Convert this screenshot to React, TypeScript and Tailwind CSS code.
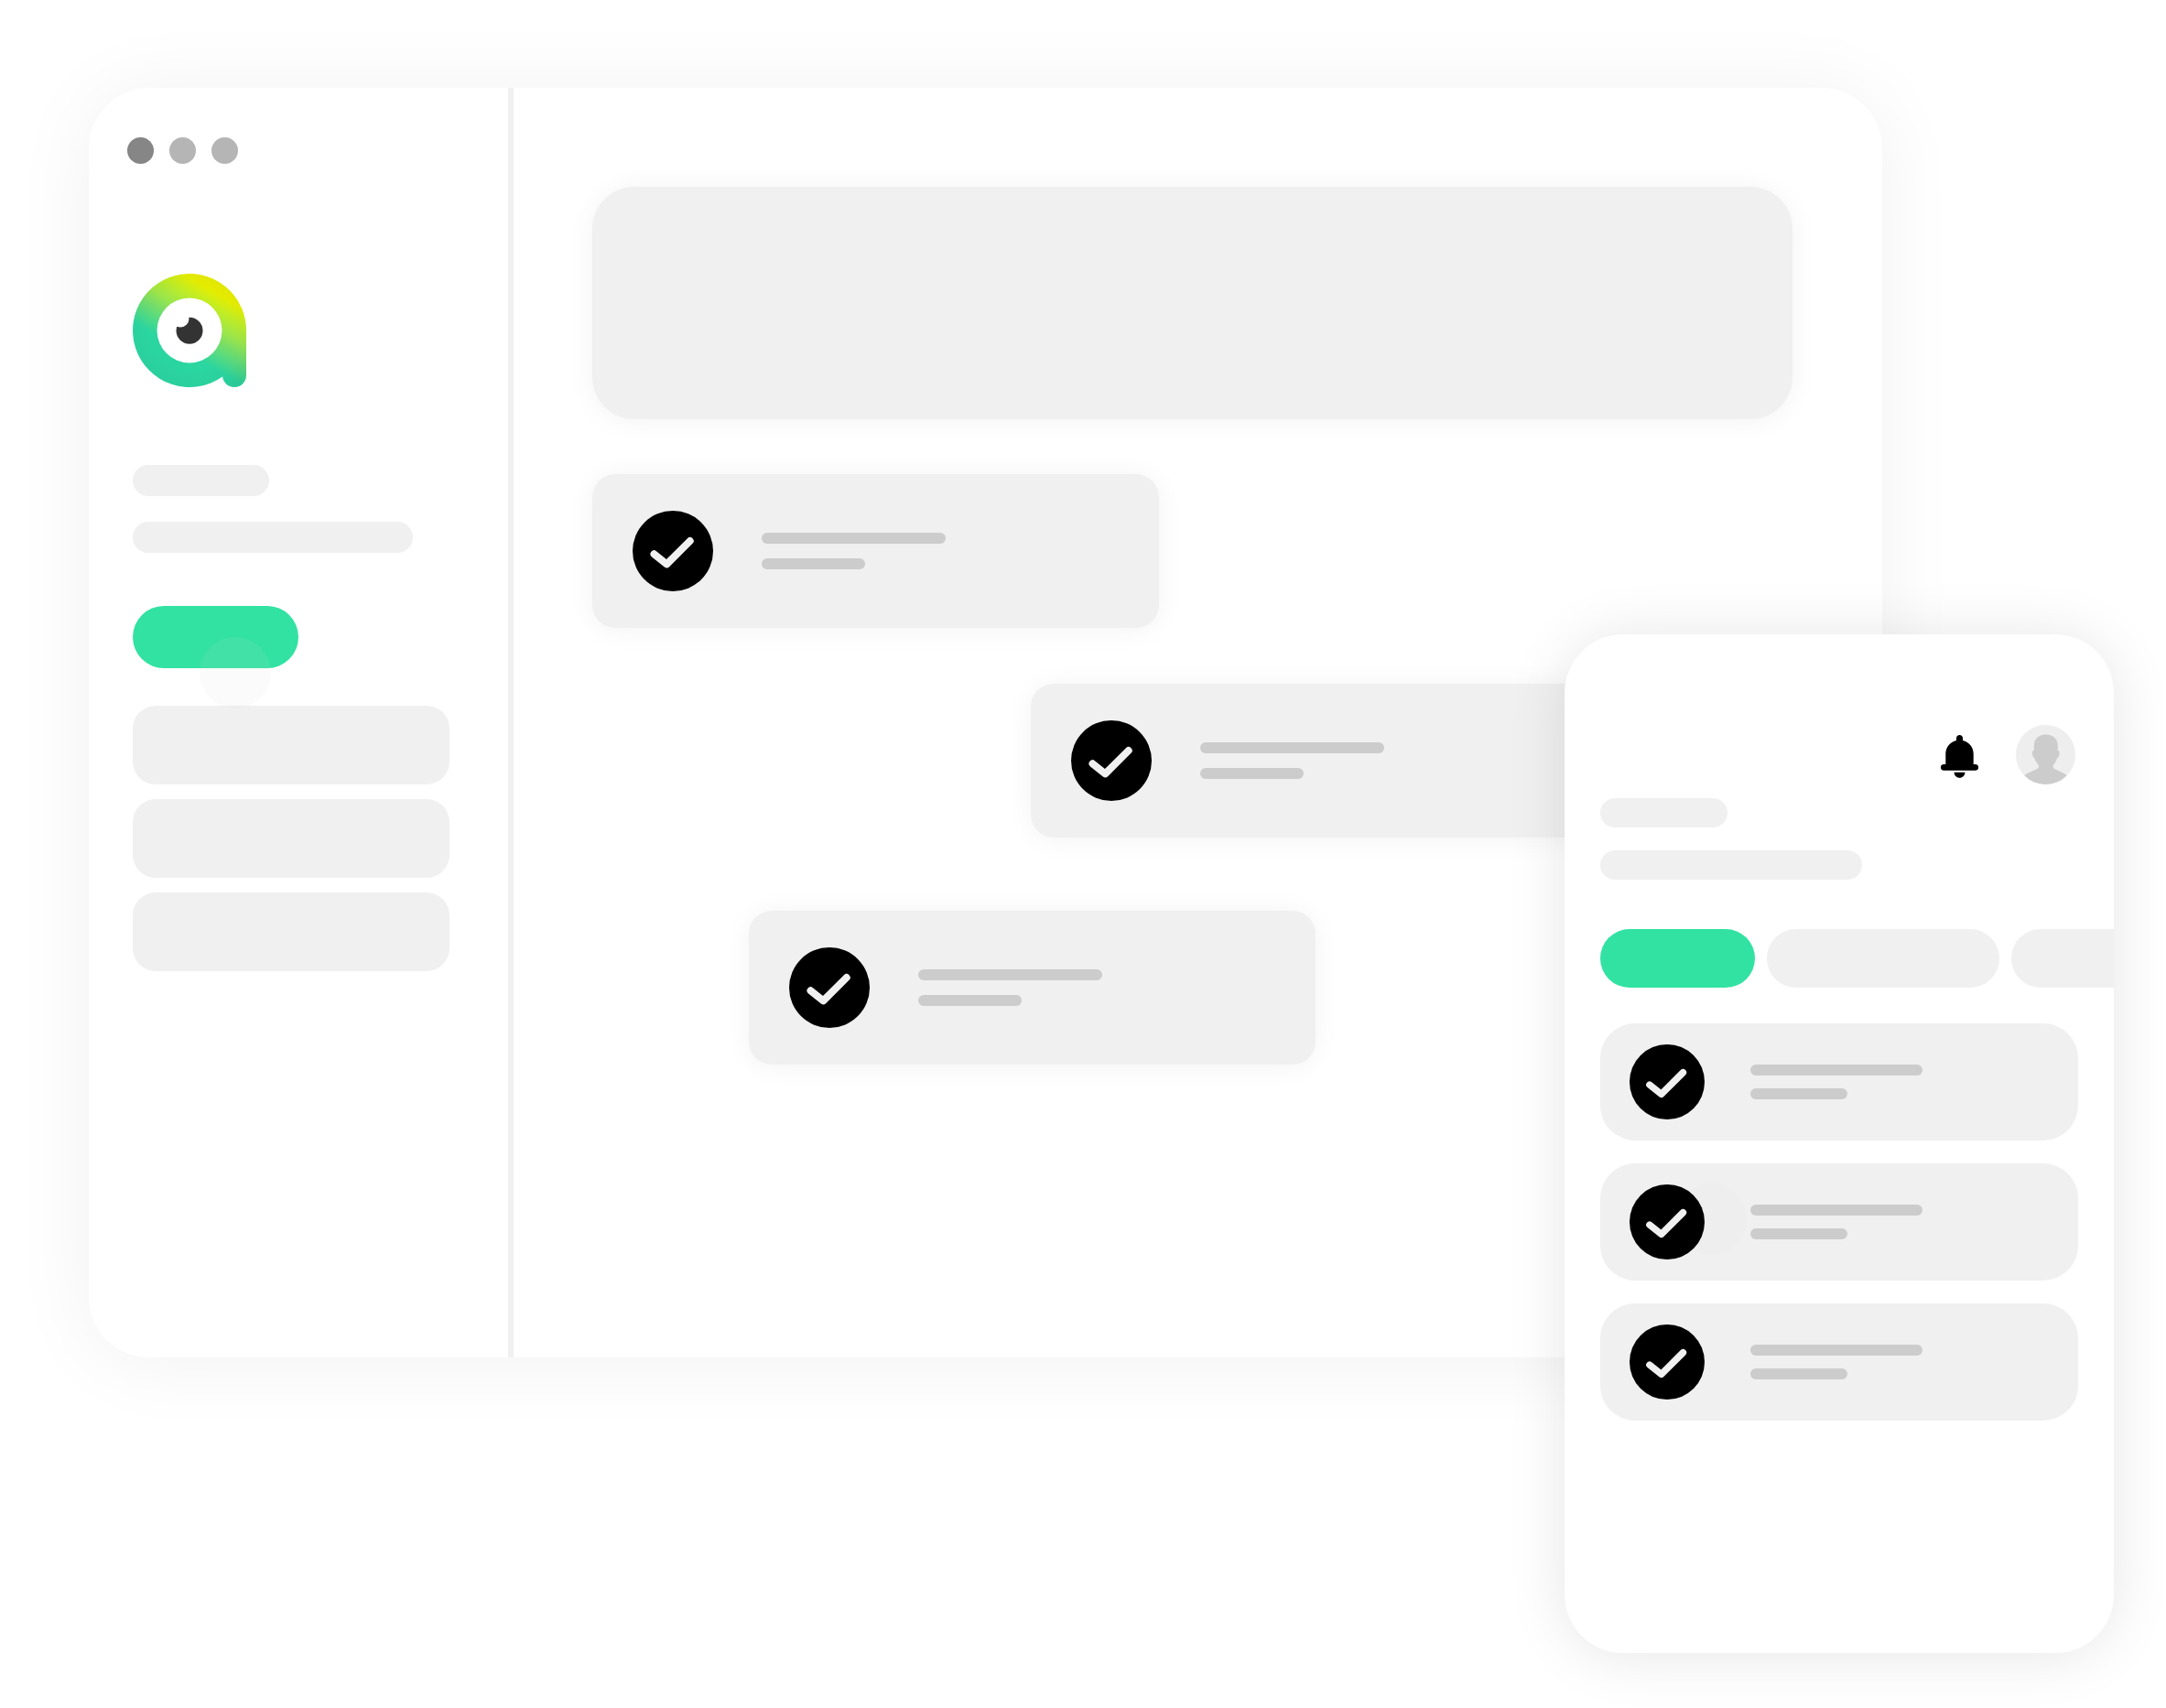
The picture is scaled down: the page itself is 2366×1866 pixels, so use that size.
type CardProps = { size: "lg" | "sm"; className?: string };

function CheckCircle({ className }: { className: string }) {
  return (
    <svg viewBox="0 0 88 88" className={className} role="img" aria-label="Done">
      <circle cx="44" cy="44" r="44" fill="#000" />
      <path
        d="M23.5 47.3 37.3 58.3 62.7 33"
        fill="none"
        stroke="#f0f0f0"
        strokeWidth="8"
        strokeLinecap="round"
        strokeLinejoin="round"
      />
    </svg>
  );
}

function TaskCard({ size, className = "" }: CardProps) {
  if (size === "lg") {
    return (
      <article
        className={`flex h-[168px] w-[619px] items-center rounded-[25px] bg-[#f0f0f0] pl-11 shadow-[0_2px_30px_rgba(0,0,0,0.05)] ${className}`}
      >
        <CheckCircle className="size-[88px] shrink-0" />
        <div className="ml-[53px] flex flex-col gap-4">
          <div className="h-[12px] w-[201px] rounded-full bg-[#cccccc]" />
          <div className="h-[12px] w-[113px] rounded-full bg-[#cccccc]" />
        </div>
      </article>
    );
  }
  return (
    <article className={`flex h-32 items-center rounded-[38px] bg-[#f0f0f0] pl-8 ${className}`}>
      <CheckCircle className="relative size-[82px] shrink-0" />
      <div className="ml-[50px] flex flex-col gap-[14px]">
        <div className="h-[12px] w-[188px] rounded-full bg-[#cccccc]" />
        <div className="h-[12px] w-[106px] rounded-full bg-[#cccccc]" />
      </div>
    </article>
  );
}

function Logo() {
  return (
    <svg viewBox="0 0 124 124" className="size-[124px]" role="img" aria-label="Logo">
      <defs>
        <linearGradient id="logo-hue" gradientUnits="userSpaceOnUse" x1="20" y1="-34.6" x2="-42.5" y2="73.6">
          <stop offset="0" stopColor="#e6ea00" />
          <stop offset="0.1" stopColor="#e6ee00" />
          <stop offset="0.21" stopColor="#c3ed22" />
          <stop offset="0.36" stopColor="#9ce64a" />
          <stop offset="0.46" stopColor="#78de68" />
          <stop offset="0.68" stopColor="#2bd6a0" />
          <stop offset="1" stopColor="#2ad3a0" />
        </linearGradient>
        <radialGradient id="logo-shade" gradientUnits="userSpaceOnUse" cx="62" cy="62" r="78">
          <stop offset="0.55" stopColor="#000" stopOpacity="0" />
          <stop offset="0.8" stopColor="#000" stopOpacity="0.02" />
          <stop offset="1" stopColor="#000" stopOpacity="0.06" />
        </radialGradient>
      </defs>
      {["url(#logo-hue)", "url(#logo-shade)"].map((fill) => (
        <path
          key={fill}
          fill={fill}
          d="M62 0A62 62 0 0 1 124 62V111A13 13 0 0 1 98 111V112.5A62 62 0 1 1 62 0Z"
        />
      ))}
      <circle cx="62" cy="62" r="35.5" fill="#fff" />
      <circle cx="62" cy="62.3" r="14.5" fill="#333" />
      <circle cx="52" cy="49" r="9.5" fill="#fff" />
    </svg>
  );
}

function BellIcon() {
  return (
    <svg viewBox="0 0 41 47" className="h-[47px] w-[41px]" aria-hidden="true">
      <path d="M20.5 0C18.5 0 17 1.5 17 3.5V6C10 7.5 5.3 13.5 5.3 20.5V32H3.3A3.3 3.3 0 0 0 3.3 38.7H37.7A3.3 3.3 0 0 0 37.7 32H35.7V20.5C35.7 13.5 31 7.5 24 6V3.5C24 1.5 22.5 0 20.5 0Z" />
      <path d="M14.5 40.7H26.5C26.3 44.2 23.8 46.7 20.5 46.7S14.7 44.2 14.5 40.7Z" />
    </svg>
  );
}

function Avatar() {
  return (
    <svg viewBox="0 0 65 65" className="size-[65px]" role="img" aria-label="Profile">
      <defs>
        <clipPath id="avatar-clip">
          <circle cx="32.5" cy="32.5" r="32.5" />
        </clipPath>
      </defs>
      <circle cx="32.5" cy="32.5" r="32.5" fill="#eee" />
      <path
        clipPath="url(#avatar-clip)"
        fill="#ccc"
        d="M32.7 10.4C40 10.4 45.5 14.5 45.7 22V28C47.4 28 48 30 47.5 32C47 34.5 46 36 45 36.5C44 40 42.5 42 41 43.5C40 46 40.5 47 43 48.5C47 50.5 51 51.5 55.5 55L56 65H9.5V55C14 51.5 18.5 50.5 22.5 48.5C25 47 25.5 46 24.5 43.5C23 42 21.5 40 20.5 36.5C19.3 36 18.5 34.5 18 32C17.5 30 18 28 19.8 28V22C20 14.5 25.5 10.4 32.7 10.4Z"
      />
    </svg>
  );
}

export default function App() {
  return (
    <main className="relative min-h-screen overflow-hidden bg-white pt-24 pr-[310px] pb-[383px] pl-[97px]">
      <section
        aria-label="Desktop workspace"
        className="flex min-h-[1387px] rounded-[66px] bg-white shadow-[0_4px_90px_rgba(0,0,0,0.06)]"
      >
        <aside className="flex w-[464px] shrink-0 flex-col border-r-6 border-[#f0f0f0] pl-12">
          <div className="mt-[54px] -ml-1.5 flex gap-[17px]">
            <span className="size-[29px] rounded-full bg-[#868686]" />
            <span className="size-[29px] rounded-full bg-[#b5b5b5]" />
            <span className="size-[29px] rounded-full bg-[#b5b5b5]" />
          </div>
          <div className="mt-[120px]">
            <Logo />
          </div>
          <div className="mt-[85px] flex flex-col gap-7">
            <div className="h-[34px] w-[149px] rounded-full bg-[#f0f0f0]" />
            <div className="h-[34px] w-[306px] rounded-full bg-[#f0f0f0]" />
          </div>
          <div className="relative mt-[58px] h-[68px] w-[181px]">
            <button type="button" aria-label="Create" className="block size-full rounded-full bg-[#32e2a2]" />
            <span className="pointer-events-none absolute top-[34px] left-[73px] size-[78px] rounded-full bg-[#d9d9d9]/10" />
          </div>
          <nav aria-label="Sections" className="mt-[41px] mr-16 flex flex-col gap-4">
            <a href="#first" aria-label="First section" className="h-[86px] rounded-[25px] bg-[#f0f0f0]" />
            <a href="#second" aria-label="Second section" className="h-[86px] rounded-[25px] bg-[#f0f0f0]" />
            <a href="#third" aria-label="Third section" className="h-[86px] rounded-[25px] bg-[#f0f0f0]" />
          </nav>
        </aside>
        <div className="flex min-w-0 flex-1 flex-col pt-[108px] pr-[98px] pl-[86px]">
          <div className="h-[254px] rounded-[46px] bg-[#f0f0f0] shadow-[0_2px_30px_rgba(0,0,0,0.05)]" />
          <TaskCard size="lg" className="mt-[60px]" />
          <TaskCard size="lg" className="mt-[61px] ml-[479px]" />
          <TaskCard size="lg" className="mt-20 ml-[171px]" />
        </div>
      </section>

      <section
        aria-label="Mobile workspace"
        className="absolute top-[693px] right-[57px] flex min-h-[1113px] w-[600px] flex-col rounded-[64px] bg-white pl-[39px] shadow-[0_2px_65px_rgba(0,0,0,0.1)]"
      >
        <header className="mt-[99px] flex items-center justify-end gap-[41px] pr-[42px]">
          <button type="button" aria-label="Notifications" className="mt-1">
            <BellIcon />
          </button>
          <Avatar />
        </header>
        <div className="mt-[15px] flex flex-col gap-[25px]">
          <div className="h-8 w-[139px] rounded-full bg-[#f0f0f0]" />
          <div className="h-8 w-[286px] rounded-full bg-[#f0f0f0]" />
        </div>
        <div className="mt-[54px] flex gap-[13px]">
          <button type="button" aria-label="All" className="h-16 w-[169px] rounded-full bg-[#32e2a2]" />
          <button type="button" aria-label="Open" className="h-16 w-[254px] rounded-full bg-[#f0f0f0]" />
          <button type="button" aria-label="More" className="h-16 flex-1 rounded-l-full bg-[#f0f0f0]" />
        </div>
        <div className="mt-[39px] mr-[39px] flex flex-col gap-[25px]">
          <TaskCard size="sm" />
          <div className="relative">
            <span className="pointer-events-none absolute top-[22px] left-[82px] size-[78px] rounded-full bg-[#d9d9d9]/8" />
            <TaskCard size="sm" />
          </div>
          <TaskCard size="sm" />
        </div>
      </section>
    </main>
  );
}
